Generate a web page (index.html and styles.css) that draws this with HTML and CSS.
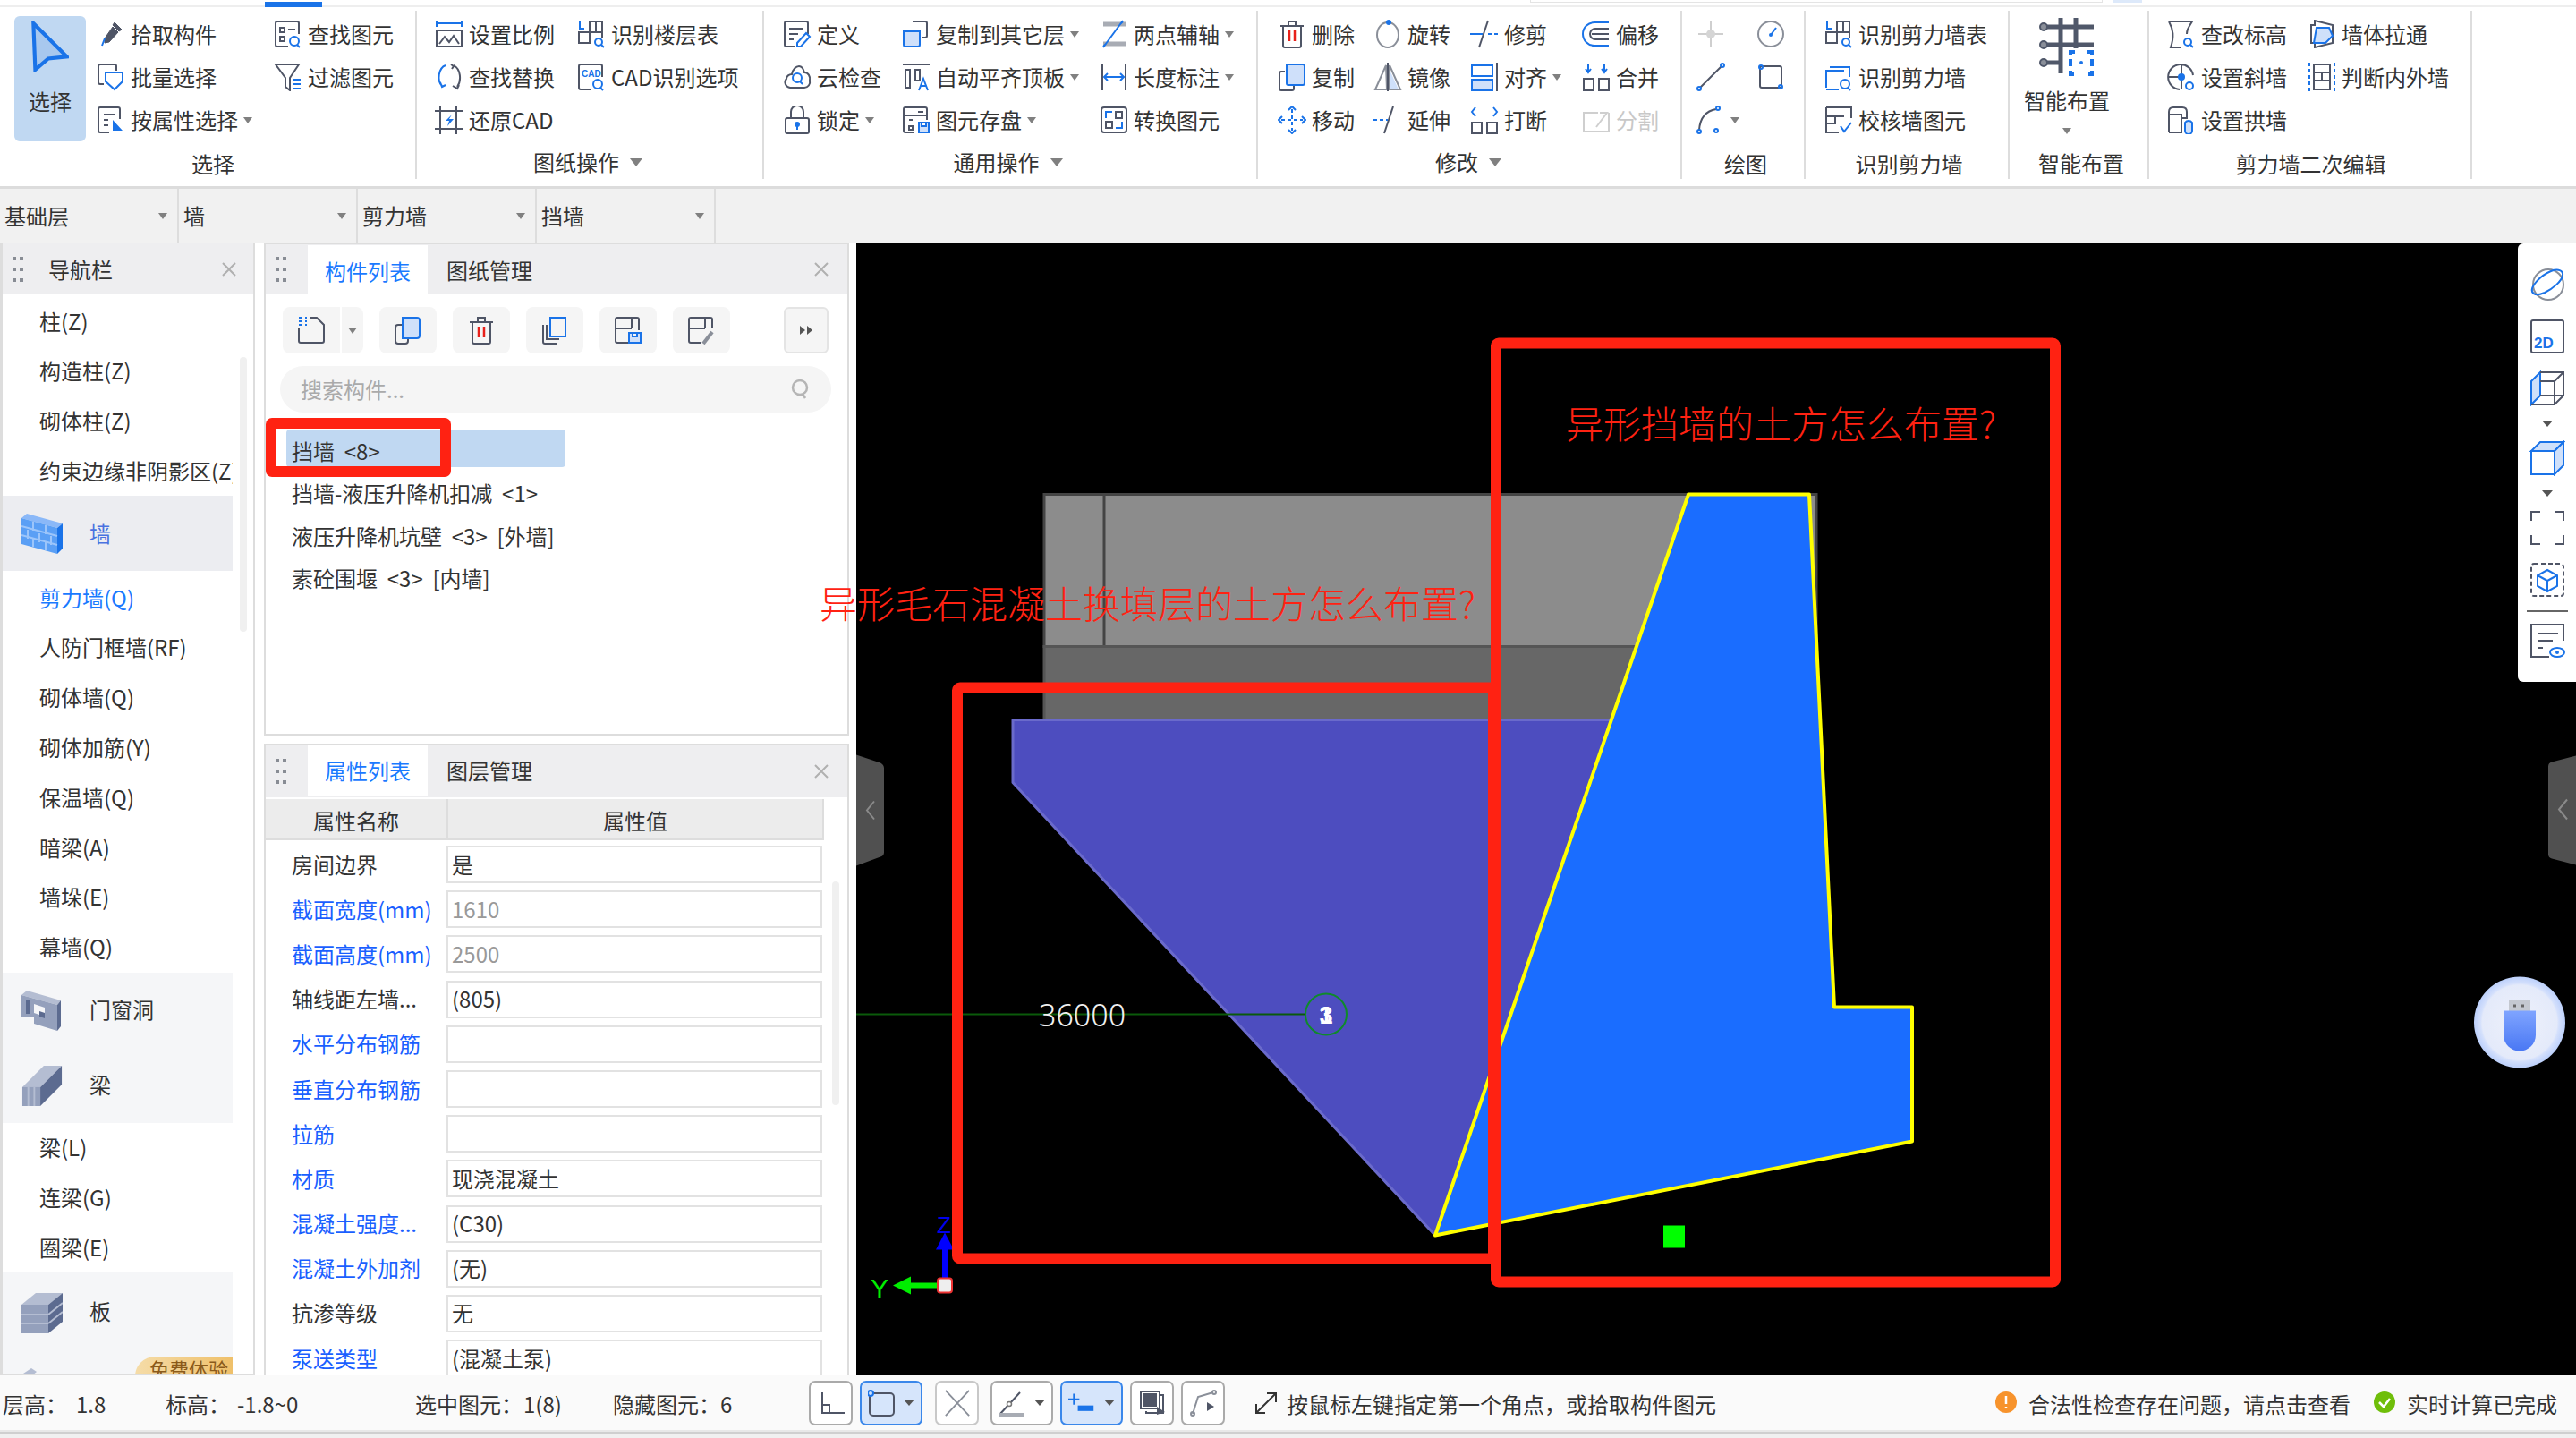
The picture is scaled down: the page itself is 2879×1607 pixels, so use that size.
FILE: index.html
```html
<!DOCTYPE html>
<html lang="zh-CN">
<head>
<meta charset="utf-8">
<title>GTJ</title>
<link rel="stylesheet" href="styles.css">
</head>
<body>
<svg class="defs" xmlns="http://www.w3.org/2000/svg">
<defs>
<radialGradient id="ballGrad"><stop offset="0" stop-color="#eef1fb"/><stop offset=".82" stop-color="#e4eafa"/><stop offset=".86" stop-color="#d4e0fc"/><stop offset="1" stop-color="#bcd0fb"/></radialGradient>
<linearGradient id="usbGrad" x1="0" y1="0" x2="0" y2="1"><stop offset="0" stop-color="#7fa4ff"/><stop offset="1" stop-color="#4a78f4"/></linearGradient>
<symbol id="i-pick" viewBox="0 0 32 32"><path class="fd" d="M18 8l6 6-10 11-5 1 0-5z"/><path class="fd" d="M20 3l8 8-3 2-7-7z"/><path class="b" d="M9 21l-3 8"/></symbol>
<symbol id="i-batch" viewBox="0 0 32 32"><path class="d" d="M8 24H4a2 2 0 0 1-2-2V4a2 2 0 0 1 2-2h16a2 2 0 0 1 2 2v5"/><path class="b" d="M10 11h19v10l-9 9-10-9z"/></symbol>
<symbol id="i-attr" viewBox="0 0 32 32"><path class="d" d="M4 2h20a2 2 0 0 1 2 2v11M14 30H4a2 2 0 0 1-2-2V4a2 2 0 0 1 2-2M8 10h12M8 16h5M8 22h5"/><path class="bf" d="M18 16l11 12h-11z"/></symbol>
<symbol id="i-find" viewBox="0 0 32 32"><path class="d" d="M16 30H4a2 2 0 0 1-2-2V4a2 2 0 0 1 2-2h22a2 2 0 0 1 2 2v12M7 9h5v5H7zM7 19h5v5H7zM16 11h8"/><circle class="b" cx="23" cy="24" r="5"/><path class="b" d="M26 28l3 3"/></symbol>
<symbol id="i-filter" viewBox="0 0 32 32"><path class="d" d="M2 2h26l-10 15v14l-5-4V17z"/><path class="b" d="M21 19h9M21 24h9M21 29h9"/></symbol>
<symbol id="i-scale" viewBox="0 0 32 32"><path class="b" d="M2 1v7M30 1v7M3 4h26"/><path class="d" d="M2 12h28v18H2zM5 27l6-8 5 6 5-7 6 9"/></symbol>
<symbol id="i-tableq" viewBox="0 0 32 32"><path class="d" d="M14 2h14v18M14 2v24H2V14h26M21 2v12"/><path class="b" d="M3 2v8h5"/><circle class="b" cx="24" cy="25" r="4"/><path class="b" d="M27 28l3 3"/></symbol>
<symbol id="i-replace" viewBox="0 0 32 32"><path class="b" d="M12 3C4 6 2 20 8 26M6 22l2 5 4-2"/><path class="d" d="M21 3c8 4 9 17 4 24M20 26l5 3 2-4M18 2l3 2-2 3"/></symbol>
<symbol id="i-cad" viewBox="0 0 32 32"><path class="d" d="M16 30H4a2 2 0 0 1-2-2V4a2 2 0 0 1 2-2h22a2 2 0 0 1 2 2v12"/><text class="cadt" x="5" y="16">CAD</text><circle class="b" cx="23" cy="24" r="5"/><path class="b" d="M26 28l3 3"/></symbol>
<symbol id="i-restore" viewBox="0 0 32 32"><path class="d" d="M6 0v32M24 0v32M0 6h32M0 26h32"/><path class="bf" d="M19 10l-7 7h4l-2 6 7-8h-5z"/></symbol>
<symbol id="i-define" viewBox="0 0 32 32"><path class="d" d="M14 30H4a2 2 0 0 1-2-2V4a2 2 0 0 1 2-2h22a2 2 0 0 1 2 2v12M7 10h16M7 16h10M7 22h5"/><path class="b" d="M26 15l4 4-10 11h-4v-4z"/></symbol>
<symbol id="i-cloud" viewBox="0 0 32 32"><path class="d" d="M8 28a6 6 0 0 1-4-10c0-3 3-5 6-5 1-6 5-9 8-9 3 0 5 3 6 7 4 0 7 4 6 9 1 4-2 8-6 8z"/><circle class="b" cx="16" cy="17" r="5"/><path class="b" d="M19 21l3 3"/></symbol>
<symbol id="i-lock" viewBox="0 0 32 32"><path class="d" d="M5 14h22a2 2 0 0 1 2 2v13a2 2 0 0 1-2 2H5a2 2 0 0 1-2-2V16a2 2 0 0 1 2-2zM9 14V7a7 7 0 0 1 14 0v7"/><circle class="bf" cx="16" cy="21" r="3"/><path class="b" d="M16 22v5"/></symbol>
<symbol id="i-copyfl" viewBox="0 0 32 32"><path class="d" d="M12 2h14a2 2 0 0 1 2 2v14a2 2 0 0 1-2 2h-4"/><path class="lb" d="M2 13h18v15a2 2 0 0 1-2 2H4a2 2 0 0 1-2-2z"/></symbol>
<symbol id="i-autotop" viewBox="0 0 32 32"><path class="d" d="M1 2h30M4 8h5v20H4zM15 8h5v12h-5z"/><path class="b" d="M19 31l5-13 5 13M21 26h6"/></symbol>
<symbol id="i-store" viewBox="0 0 32 32"><path class="d" d="M14 30H4a2 2 0 0 1-2-2V4a2 2 0 0 1 2-2h22a2 2 0 0 1 2 2v12M2 11h26M8 16h4M18 7h6M8 23h4v4H8z"/><path class="lb" d="M19 19h11v11H19zM22 19v4h5v-4"/></symbol>
<symbol id="i-axis2" viewBox="0 0 32 32"><path class="gt" d="M4 5h26M4 27h26"/><path class="b" d="M4 31L26 1M4 30l3-3M26 2l-3 3"/></symbol>
<symbol id="i-dim" viewBox="0 0 32 32"><path class="d" d="M3 1v30M29 1v30"/><path class="b" d="M5 16h22M9 12l-4 4 4 4M23 12l4 4-4 4"/></symbol>
<symbol id="i-conv" viewBox="0 0 32 32"><path class="d" d="M5 2h22a3 3 0 0 1 3 3v22a3 3 0 0 1-3 3H5a3 3 0 0 1-3-3V5a3 3 0 0 1 3-3zM7 18h7v7H7zM18 7h7v7h-7z"/><path class="b" d="M7 14V7h7M25 18v7h-7"/></symbol>
<symbol id="i-del" viewBox="0 0 32 32"><path class="d" d="M3 7h26M12 7V2h8v5M6 7v22a2 2 0 0 0 2 2h16a2 2 0 0 0 2-2V7"/><path class="r" d="M13 12v12M19 12v12"/></symbol>
<symbol id="i-rot" viewBox="0 0 32 32"><ellipse class="gr" cx="16" cy="17" rx="12" ry="14"/><circle class="bf" cx="17" cy="3" r="3"/></symbol>
<symbol id="i-trim" viewBox="0 0 32 32"><path class="d" d="M20 1L10 31"/><path class="b" d="M0 16h14"/><path class="bd" d="M20 16h12"/></symbol>
<symbol id="i-offset" viewBox="0 0 32 32"><path class="b" d="M30 3H14a13 13 0 0 0 0 26h16"/><path class="d" d="M30 10H15a6 6 0 0 0 0 12h15M11 16h19"/></symbol>
<symbol id="i-copy" viewBox="0 0 32 32"><path class="d" d="M8 10H4a2 2 0 0 0-2 2v17a2 2 0 0 0 2 2h12a2 2 0 0 0 2-2v-4"/><path class="lb" d="M10 2h18a2 2 0 0 1 2 2v19a2 2 0 0 1-2 2H12a2 2 0 0 1-2-2z"/></symbol>
<symbol id="i-mirror" viewBox="0 0 32 32"><path class="gr" d="M14 3L2 30h13zM18 3l12 27H18z"/><path class="lbn" d="M18 8l10 22H18z"/><path class="d" d="M16 0v32"/></symbol>
<symbol id="i-align" viewBox="0 0 32 32"><path class="d" d="M30 0v32"/><path class="b" d="M2 3h23v12H2z"/><path class="lb" d="M2 19h23v12H2z"/></symbol>
<symbol id="i-merge" viewBox="0 0 32 32"><path class="d" d="M2 18h11v13H2zM19 18h11v13H19z"/><path class="b" d="M7 1v10M25 1v10M4 7l3 4 3-4M22 7l3 4 3-4"/></symbol>
<symbol id="i-move" viewBox="0 0 32 32"><path class="bd" d="M16 4v24M4 16h24"/><path class="b" d="M12 5l4-4 4 4M12 27l4 4 4-4M5 12l-4 4 4 4M27 12l4 4-4 4"/></symbol>
<symbol id="i-ext" viewBox="0 0 32 32"><path class="d" d="M22 1L12 31"/><path class="bd" d="M0 16h16"/></symbol>
<symbol id="i-break" viewBox="0 0 32 32"><path class="d" d="M2 19h11v12H2zM19 19h11v12H19z"/><path class="b" d="M6 2L2 7l4 5M26 2l4 5-4 5"/></symbol>
<symbol id="i-split" viewBox="0 0 32 32"><path class="lg" d="M30 8v21H2V8h16M16 24l12-16h-8"/></symbol>
<symbol id="i-pt" viewBox="0 0 32 32"><path class="lg" d="M16 2v28M2 16h28"/><circle class="lgf" cx="16" cy="16" r="5"/></symbol>
<symbol id="i-clock" viewBox="0 0 32 32"><circle class="gr" cx="16" cy="16" r="14"/><path class="b" d="M16 17l6-8"/><circle class="bf" cx="16" cy="17" r="2"/></symbol>
<symbol id="i-ln" viewBox="0 0 32 32"><path class="d" d="M4 28L28 4"/><circle class="b" cx="3" cy="29" r="2"/><circle class="b" cx="29" cy="3" r="2"/></symbol>
<symbol id="i-rc" viewBox="0 0 32 32"><path class="d" d="M6 4h20a2 2 0 0 1 2 2v20a2 2 0 0 1-2 2H6a2 2 0 0 1-2-2V6a2 2 0 0 1 2-2z"/><circle class="b" cx="5" cy="5" r="2"/><circle class="b" cx="27" cy="27" r="2"/></symbol>
<symbol id="i-arc" viewBox="0 0 32 32"><path class="d" d="M3 27C4 15 10 6 22 4"/><circle class="b" cx="3" cy="29" r="2"/><circle class="b" cx="24" cy="3" r="2"/><circle class="b" cx="22" cy="28" r="2"/></symbol>
<symbol id="i-wrec" viewBox="0 0 32 32"><path class="b" d="M6 5h22v11M2 28V9h20M2 30h14"/><circle class="b" cx="23" cy="24" r="5"/><path class="b" d="M26 28l3 3"/></symbol>
<symbol id="i-wchk" viewBox="0 0 32 32"><path class="d" d="M2 2h28v12M2 2v28h14M2 12h20M12 12v8H2"/><path class="b" d="M18 23l4 6 8-10"/></symbol>
<symbol id="i-smart" viewBox="0 0 62 66"><path class="thick" d="M24 0v62M41 0v34M5 10h56M5 30h56M5 50h19"/><circle class="dk" cx="5" cy="10" r="4"/><circle class="dk" cx="5" cy="30" r="4"/><circle class="dk" cx="5" cy="50" r="4"/><path class="thb" d="M40 38h-5v25h5M54 38h5v25h-5"/><circle class="bf" cx="47" cy="50" r="2"/></symbol>
<symbol id="i-elev" viewBox="0 0 32 32"><path class="d" d="M2 2h26c-5 8-6 10-6 14M2 2c5 9 6 17 2 29h12"/><circle class="b" cx="23" cy="25" r="4"/><path class="b" d="M26 28l3 3"/></symbol>
<symbol id="i-pull" viewBox="0 0 32 32"><path class="d" d="M4 6h4V1l20 5v20l-20 5v-5H4z"/><path class="lb" d="M10 9h14l4 9-8 8H7z"/></symbol>
<symbol id="i-slope" viewBox="0 0 32 32"><path class="d" d="M14 30A14 14 0 1 1 29 14M2 16h15M16 2v28"/><circle class="bf" cx="16" cy="16" r="4"/><circle class="b" cx="25" cy="26" r="4"/></symbol>
<symbol id="i-inout" viewBox="0 0 32 32"><path class="d" d="M7 2h18v28H7zM7 11h18M7 20h18M16 11v9"/><path class="bd" d="M2 0v32M30 0v32"/></symbol>
<symbol id="i-arch" viewBox="0 0 32 32"><path class="d" d="M2 30V7c0-3 2-5 5-5h10c3 0 5 2 5 5v8M2 10h14v20H2M16 14h6"/><path class="lb" d="M20 19a5 5 0 0 1 8 0v9a4 4 0 0 1-8 0z"/></symbol>
<symbol id="i-new" viewBox="0 0 32 32"><path class="d" d="M14 2h8l8 8v18a2 2 0 0 1-2 2H4a2 2 0 0 1-2-2V14"/><path class="bd" d="M2 2h9M2 6h9M2 10h9"/></symbol>
<symbol id="i-dup" viewBox="0 0 32 32"><path class="d" d="M9 10H5a3 3 0 0 0-3 3v15a3 3 0 0 0 3 3h8a3 3 0 0 0 3-3v-2"/><path class="lb" d="M10 2h16a3 3 0 0 1 3 3v17a3 3 0 0 1-3 3H10z"/></symbol>
<symbol id="i-cpy2" viewBox="0 0 32 32"><path class="d" d="M3 10v19a2 2 0 0 0 2 2h14M7 10v16h14"/><path class="b" d="M11 2h17v21H11z"/></symbol>
<symbol id="i-sv" viewBox="0 0 32 32"><path class="d" d="M16 30H4a2 2 0 0 1-2-2V4a2 2 0 0 1 2-2h22a2 2 0 0 1 2 2v12M2 14h18M20 2v12"/><path class="lb" d="M17 19h13v11H17zM21 19v4h5v-4"/></symbol>
<symbol id="i-sp" viewBox="0 0 32 32"><path class="d" d="M16 30H4a2 2 0 0 1-2-2V4a2 2 0 0 1 2-2h22a2 2 0 0 1 2 2v10M2 14h18M20 2v12"/><path class="gt2" d="M28 18L18 31"/></symbol>
<symbol id="i-grip" viewBox="0 0 12 28"><path class="gp" d="M0 0h4v4H0zM8 0h4v4H8zM0 12h4v4H0zM8 12h4v4H8zM0 24h4v4H0zM8 24h4v4H8z"/></symbol>
<symbol id="i-x" viewBox="0 0 16 16"><path class="xl" d="M1 1l14 14M15 1L1 15"/></symbol>
<symbol id="i-sr" viewBox="0 0 20 24"><circle class="gs" cx="10" cy="10" r="8"/><path class="gs" d="M13 17l3 5"/></symbol>
</defs>
</svg>

<div class="app">
<div class="strip"><span class="strip-tab"></span><span class="strip-box"></span><span class="strip-lt"></span></div>

<div class="ribbon">
  <section class="grp g1">
    <div class="cols">
      <div class="bigsel"><svg class="bigarrow" viewBox="0 0 40 54"><path d="M2 2l36 36-20 2-14 12z"/></svg><span>选择</span></div>
      <div class="col w198">
        <div class="item"><svg class="ic"><use href="#i-pick"/></svg><span>拾取构件</span></div>
        <div class="item"><svg class="ic"><use href="#i-batch"/></svg><span>批量选择</span></div>
        <div class="item"><svg class="ic"><use href="#i-attr"/></svg><span>按属性选择</span><i class="dd"></i></div>
      </div>
      <div class="col">
        <div class="item"><svg class="ic"><use href="#i-find"/></svg><span>查找图元</span></div>
        <div class="item"><svg class="ic"><use href="#i-filter"/></svg><span>过滤图元</span></div>
      </div>
    </div>
    <div class="glabel">选择</div>
  </section>
  <section class="grp g2">
    <div class="cols">
      <div class="col w159">
        <div class="item"><svg class="ic"><use href="#i-scale"/></svg><span>设置比例</span></div>
        <div class="item"><svg class="ic"><use href="#i-replace"/></svg><span>查找替换</span></div>
        <div class="item"><svg class="ic"><use href="#i-restore"/></svg><span>还原CAD</span></div>
      </div>
      <div class="col">
        <div class="item"><svg class="ic"><use href="#i-tableq"/></svg><span>识别楼层表</span></div>
        <div class="item"><svg class="ic"><use href="#i-cad"/></svg><span>CAD识别选项</span></div>
      </div>
    </div>
    <div class="glabel">图纸操作<i class="dd wide"></i></div>
  </section>
  <section class="grp g3">
    <div class="cols">
      <div class="col w133">
        <div class="item"><svg class="ic"><use href="#i-define"/></svg><span>定义</span></div>
        <div class="item"><svg class="ic"><use href="#i-cloud"/></svg><span>云检查</span></div>
        <div class="item"><svg class="ic"><use href="#i-lock"/></svg><span>锁定</span><i class="dd"></i></div>
      </div>
      <div class="col w221">
        <div class="item"><svg class="ic"><use href="#i-copyfl"/></svg><span>复制到其它层</span><i class="dd"></i></div>
        <div class="item"><svg class="ic"><use href="#i-autotop"/></svg><span>自动平齐顶板</span><i class="dd"></i></div>
        <div class="item"><svg class="ic"><use href="#i-store"/></svg><span>图元存盘</span><i class="dd"></i></div>
      </div>
      <div class="col">
        <div class="item"><svg class="ic"><use href="#i-axis2"/></svg><span>两点辅轴</span><i class="dd"></i></div>
        <div class="item"><svg class="ic"><use href="#i-dim"/></svg><span>长度标注</span><i class="dd"></i></div>
        <div class="item"><svg class="ic"><use href="#i-conv"/></svg><span>转换图元</span></div>
      </div>
    </div>
    <div class="glabel">通用操作<i class="dd wide"></i></div>
  </section>
  <section class="grp g4">
    <div class="cols">
      <div class="col w107">
        <div class="item"><svg class="ic"><use href="#i-del"/></svg><span>删除</span></div>
        <div class="item"><svg class="ic"><use href="#i-copy"/></svg><span>复制</span></div>
        <div class="item"><svg class="ic"><use href="#i-move"/></svg><span>移动</span></div>
      </div>
      <div class="col w108">
        <div class="item"><svg class="ic"><use href="#i-rot"/></svg><span>旋转</span></div>
        <div class="item"><svg class="ic"><use href="#i-mirror"/></svg><span>镜像</span></div>
        <div class="item"><svg class="ic"><use href="#i-ext"/></svg><span>延伸</span></div>
      </div>
      <div class="col w125">
        <div class="item"><svg class="ic"><use href="#i-trim"/></svg><span>修剪</span></div>
        <div class="item"><svg class="ic"><use href="#i-align"/></svg><span>对齐</span><i class="dd"></i></div>
        <div class="item"><svg class="ic"><use href="#i-break"/></svg><span>打断</span></div>
      </div>
      <div class="col">
        <div class="item"><svg class="ic"><use href="#i-offset"/></svg><span>偏移</span></div>
        <div class="item"><svg class="ic"><use href="#i-merge"/></svg><span>合并</span></div>
        <div class="item off"><svg class="ic"><use href="#i-split"/></svg><span>分割</span></div>
      </div>
    </div>
    <div class="glabel">修改<i class="dd wide"></i></div>
  </section>
  <section class="grp g5">
    <div class="cols">
      <div class="col w67">
        <div class="item"><svg class="ic"><use href="#i-pt"/></svg></div>
        <div class="item"><svg class="ic"><use href="#i-ln"/></svg></div>
        <div class="item"><svg class="ic"><use href="#i-arc"/></svg><i class="dd"></i></div>
      </div>
      <div class="col">
        <div class="item"><svg class="ic"><use href="#i-clock"/></svg></div>
        <div class="item"><svg class="ic"><use href="#i-rc"/></svg></div>
      </div>
    </div>
    <div class="glabel">绘图</div>
  </section>
  <section class="grp g6">
    <div class="cols">
      <div class="col">
        <div class="item"><svg class="ic"><use href="#i-tableq"/></svg><span>识别剪力墙表</span></div>
        <div class="item"><svg class="ic"><use href="#i-wrec"/></svg><span>识别剪力墙</span></div>
        <div class="item"><svg class="ic"><use href="#i-wchk"/></svg><span>校核墙图元</span></div>
      </div>
    </div>
    <div class="glabel">识别剪力墙</div>
  </section>
  <section class="grp g7">
    <div class="cols">
      <div class="bigsmart"><svg class="smart"><use href="#i-smart"/></svg><span>智能布置</span><i class="dd"></i></div>
    </div>
    <div class="glabel">智能布置</div>
  </section>
  <section class="grp g8">
    <div class="cols">
      <div class="col w157">
        <div class="item"><svg class="ic"><use href="#i-elev"/></svg><span>查改标高</span></div>
        <div class="item"><svg class="ic"><use href="#i-slope"/></svg><span>设置斜墙</span></div>
        <div class="item"><svg class="ic"><use href="#i-arch"/></svg><span>设置拱墙</span></div>
      </div>
      <div class="col">
        <div class="item"><svg class="ic"><use href="#i-pull"/></svg><span>墙体拉通</span></div>
        <div class="item"><svg class="ic"><use href="#i-inout"/></svg><span>判断内外墙</span></div>
      </div>
    </div>
    <div class="glabel">剪力墙二次编辑</div>
  </section>
</div>

<div class="selbar">
  <div class="selcell"><span>基础层</span><i class="dd"></i></div>
  <div class="selcell"><span>墙</span><i class="dd"></i></div>
  <div class="selcell"><span>剪力墙</span><i class="dd"></i></div>
  <div class="selcell"><span>挡墙</span><i class="dd"></i></div>
</div>

<div class="main">
  <aside class="nav">
    <div class="navhead"><svg class="grip"><use href="#i-grip"/></svg><span class="navtitle">导航栏</span><svg class="close"><use href="#i-x"/></svg></div>
    <div class="navlist">
      <div class="nrow">柱(Z)</div>
      <div class="nrow">构造柱(Z)</div>
      <div class="nrow">砌体柱(Z)</div>
      <div class="nrow">约束边缘非阴影区(Z)</div>
      <div class="ngroup on">
        <svg class="nicon" viewBox="0 0 46 46"><path class="wt" d="M0 6l6-5 40 11-6 5z"/><path class="wf" d="M0 6l40 11v29L0 35z"/><path class="wd" d="M40 17l6-5v28l-6 6z"/><path class="wl" d="M0 15l40 11M0 25l40 11M13 10v10M27 14v10M7 19v10M20 23v10M33 26v10M13 29v9M27 33v9"/></svg>
        <span>墙</span>
      </div>
      <div class="nrow act">剪力墙(Q)</div>
      <div class="nrow">人防门框墙(RF)</div>
      <div class="nrow">砌体墙(Q)</div>
      <div class="nrow">砌体加筋(Y)</div>
      <div class="nrow">保温墙(Q)</div>
      <div class="nrow">暗梁(A)</div>
      <div class="nrow">墙垛(E)</div>
      <div class="nrow">幕墙(Q)</div>
      <div class="ngroup">
        <svg class="nicon" viewBox="0 0 46 46"><path class="st" d="M0 6l6-5 38 11-4 5z"/><path class="sf" d="M0 6l40 11v29l-26-8V26l12 4V20L14 16v14L0 30z"/><path class="sd" d="M40 17l4-5v29l-4 5z"/><path class="sd" d="M5 12h5v15H5zM20 24l6 2v6l-6-2z"/></svg>
        <span>门窗洞</span>
      </div>
      <div class="ngroup">
        <svg class="nicon" viewBox="0 0 46 48"><path class="st" d="M0 26L25 1h21L21 26z"/><path class="sf" d="M0 26h21v22H0z"/><path class="sd" d="M21 26L46 1v22L21 48z"/><path class="wl2" d="M7 26v22M14 26v22"/></svg>
        <span>梁</span>
      </div>
      <div class="nrow">梁(L)</div>
      <div class="nrow">连梁(G)</div>
      <div class="nrow">圈梁(E)</div>
      <div class="ngroup last">
        <svg class="nicon" viewBox="0 0 46 46"><path class="st" d="M0 14L16 1h30L30 14z"/><path class="sf" d="M0 14h30v32H0z"/><path class="sd" d="M30 14L46 1v32L30 46z"/><path class="wl2" d="M0 25h30M0 35h30M30 25L46 12M30 35l16-13"/></svg>
        <span>板</span>
        <svg class="nicon2" viewBox="0 0 20 20"><path class="st" d="M0 10L12 2l6 4-10 8z"/></svg>
        <div class="badge">免费体验</div>
      </div>
    </div>
    <div class="navscroll"></div>
  </aside>

  <div class="midcol">
    <section class="panel top">
      <div class="phead"><svg class="grip"><use href="#i-grip"/></svg><div class="tab on">构件列表</div><div class="tab">图纸管理</div><svg class="close"><use href="#i-x"/></svg></div>
      <div class="tools">
        <div class="tbtn split"><svg class="tic"><use href="#i-new"/></svg><span class="tsplit"><i class="dd"></i></span></div>
        <div class="tbtn"><svg class="tic"><use href="#i-dup"/></svg></div>
        <div class="tbtn"><svg class="tic"><use href="#i-del"/></svg></div>
        <div class="tbtn"><svg class="tic"><use href="#i-cpy2"/></svg></div>
        <div class="tbtn"><svg class="tic"><use href="#i-sv"/></svg></div>
        <div class="tbtn"><svg class="tic"><use href="#i-sp"/></svg></div>
        <div class="tmore"><i class="ff"></i><i class="ff"></i></div>
      </div>
      <div class="search"><span>搜索构件...</span><svg class="sic"><use href="#i-sr"/></svg></div>
      <div class="clist">
        <div class="crow sel">挡墙  &lt;8&gt;</div>
        <div class="crow">挡墙-液压升降机扣减  &lt;1&gt;</div>
        <div class="crow">液压升降机坑壁  &lt;3&gt;  [外墙]</div>
        <div class="crow">素砼围堰  &lt;3&gt;  [内墙]</div>
      </div>
      <div class="redmark"></div>
    </section>

    <section class="panel prop">
      <div class="phead short"><svg class="grip"><use href="#i-grip"/></svg><div class="tab on">属性列表</div><div class="tab">图层管理</div><svg class="close"><use href="#i-x"/></svg></div>
      <div class="thead"><div>属性名称</div><div>属性值</div></div>
      <div class="rows">
        <div class="prow"><span class="k">房间边界</span><span class="v">是</span></div>
        <div class="prow"><span class="k bl">截面宽度(mm)</span><span class="v dim">1610</span></div>
        <div class="prow"><span class="k bl">截面高度(mm)</span><span class="v dim">2500</span></div>
        <div class="prow"><span class="k">轴线距左墙...</span><span class="v">(805)</span></div>
        <div class="prow"><span class="k bl">水平分布钢筋</span><span class="v"></span></div>
        <div class="prow"><span class="k bl">垂直分布钢筋</span><span class="v"></span></div>
        <div class="prow"><span class="k bl">拉筋</span><span class="v"></span></div>
        <div class="prow"><span class="k bl">材质</span><span class="v">现浇混凝土</span></div>
        <div class="prow"><span class="k bl">混凝土强度...</span><span class="v">(C30)</span></div>
        <div class="prow"><span class="k bl">混凝土外加剂</span><span class="v">(无)</span></div>
        <div class="prow"><span class="k">抗渗等级</span><span class="v">无</span></div>
        <div class="prow"><span class="k bl">泵送类型</span><span class="v">(混凝土泵)</span></div>
      </div>
      <div class="propscroll"></div>
    </section>
  </div>

  <div class="canvas">
    <svg class="scene" viewBox="957 273 1922 1264">
      <rect class="g-up" x="1167" y="553" width="863" height="170"/>
      <path class="g-ln" d="M1234 553v170"/>
      <rect class="g-lo" x="1167" y="723" width="740" height="82"/>
      <path class="purple" d="M1132 805H1810L1604 1381L1132 875Z"/>
      <path class="blue" d="M1887 553H2022L2050 1126H2137V1276L1604 1381Z"/>
      <path class="gline" d="M957 1134H1459"/>
      <circle class="gring" cx="1482" cy="1134" r="23"/>
      <text class="ringt" x="1482" y="1144">1</text>
      <text class="ringt" x="1482" y="1144">3</text>
      <text class="dimt" x="1161" y="1147">36000</text>
      <rect class="gsq" x="1859" y="1370" width="24" height="25"/>
      <path class="axz" d="M1056 1430V1395"/><path class="axzf" d="M1046 1397L1056 1378L1066 1397Z"/>
      <path class="axy" d="M1050 1437H1015"/><path class="axyf" d="M1018 1427L998 1437L1018 1447Z"/>
      <rect class="axo" x="1048" y="1429" width="16" height="16" rx="3"/>
      <text class="axtz" x="1047" y="1378">Z</text>
      <text class="axty" x="973" y="1450">Y</text>
      <rect class="redbox" x="1070" y="769" width="599" height="638" rx="3"/>
      <rect class="redbox" x="1672" y="384" width="625" height="1049" rx="3"/>
      <text class="note" x="1750" y="490">异形挡墙的土方怎么布置?</text>
      <text class="note" x="916" y="691">异形毛石混凝土换填层的土方怎么布置?</text>
      <path class="hand" d="M957 844L984 853Q988 855 988 859V953Q988 957 984 958L957 968Z"/>
      <path class="chev" d="M977 896L969 906L977 916"/>
      <path class="hand" d="M2879 845L2852 852Q2848 853 2848 857V955Q2848 959 2852 960L2879 967Z"/>
      <path class="chev" d="M2869 894L2860 905L2869 916"/>
      <circle class="ball" cx="2816" cy="1143" r="51"/>
      <rect class="ucap" x="2804" y="1118" width="24" height="14"/>
      <rect class="uhole" x="2809" y="1123" width="3" height="3"/><rect class="uhole" x="2818" y="1123" width="3" height="3"/>
      <path class="ubody" d="M2798 1130H2834V1157A18 18 0 0 1 2798 1157Z"/>
    </svg>
    <div class="rtools">
      <div class="rt"><svg class="rtic" viewBox="0 0 40 40"><circle class="gr" cx="21" cy="20" r="17"/><path class="b" d="M3 28C1 22 12 10 24 5c8-3 14-1 13 5-1 6-10 14-20 19-7 3-12 3-14-1z"/></svg></div>
      <div class="rt"><svg class="rtic" viewBox="0 0 40 40"><rect class="d" x="2" y="2" width="36" height="36" rx="2"/><text class="t2d" x="5" y="33">2D</text></svg></div>
      <div class="rt"><svg class="rtic" viewBox="0 0 40 40"><path class="lb" d="M2 12L12 2V28L2 38Z"/><path class="d" d="M12 2H38V28L28 38H2M12 28H38M28 12V38M28 12L38 2M12 12H28"/></svg></div>
      <div class="rtdrop"><i class="ddk"></i></div>
      <div class="rt"><svg class="rtic" viewBox="0 0 40 40"><path class="lb" d="M2 12L12 2H38L28 12Z"/><path class="lb" d="M28 12L38 2V28L28 38Z"/><path class="b" d="M2 12H28V38H2Z"/></svg></div>
      <div class="rtdrop"><i class="ddk"></i></div>
      <div class="rt"><svg class="rtic" viewBox="0 0 40 40"><path class="d" d="M2 12V2H12M28 2H38V12M38 28V38H28M12 38H2V28"/></svg></div>
      <div class="rt"><svg class="rtic" viewBox="0 0 40 40"><rect class="dd2" x="2" y="2" width="36" height="36" rx="3"/><path class="b" d="M20 9L31 15V27L20 33L9 27V15ZM9 15L20 21L31 15M20 21V33"/></svg></div>
      <div class="rthr"></div>
      <div class="rt short"><svg class="rtic" viewBox="0 0 40 40"><path class="d" d="M22 38H2V2H38V20M9 12H32M9 20H26M9 28H15"/><ellipse class="b" cx="31" cy="33" rx="8" ry="5"/><circle class="bf" cx="31" cy="33" r="2"/></svg></div>
    </div>
  </div>
</div>

<div class="status">
  <div class="stat s1"><span>层高：</span><span>1.8</span></div>
  <div class="stat s2"><span>标高：</span><span>-1.8~0</span></div>
  <div class="stat s3"><span>选中图元：</span><span>1(8)</span></div>
  <div class="stat s4"><span>隐藏图元：</span><span>6</span></div>
  <div class="sbtns">
    <div class="sb"><svg class="sbi" viewBox="0 0 30 30"><path class="d" d="M5 3V26H30M5 17H13V26"/></svg></div>
    <div class="sb wide on"><svg class="sbi" viewBox="0 0 30 30"><rect class="d" x="2" y="4" width="27" height="25" rx="4"/><circle class="bw" cx="3" cy="4" r="3"/></svg><i class="ddk"></i></div>
    <div class="sb light"><svg class="sbi" viewBox="0 0 32 32"><path class="gr" d="M2 1L30 31M30 1L2 31"/></svg></div>
    <div class="sb wide"><svg class="sbi" viewBox="0 0 30 30"><path class="d" d="M1 28L24 3"/><rect class="gb" x="1" y="26" width="28" height="4"/><circle class="wc" cx="12" cy="16" r="2.500"/></svg><i class="ddk"></i></div>
    <div class="sb wide on"><svg class="sbi" viewBox="0 0 34 30"><path class="b" d="M0 10H14M7 3V17"/><rect class="bfr" x="12" y="18" width="20" height="7"/></svg><i class="ddk"></i></div>
    <div class="sb"><svg class="sbi" viewBox="0 0 30 30"><path class="d" d="M2 2H23V21H2zM24 6H27V26H8V24"/><rect class="dkf" x="4" y="4" width="16" height="15"/><path class="dkf" d="M20 19L29 25L20 28Z"/></svg></div>
    <div class="sb"><svg class="sbi" viewBox="0 0 30 30"><path class="gr" d="M3 27L9 8L26 3"/><circle class="gr" cx="3" cy="27" r="2"/><circle class="gr" cx="27" cy="3" r="2"/><path class="dkf" d="M19 14L27 19L19 24Z"/></svg></div>
  </div>
  <svg class="pic" viewBox="0 0 26 26"><path class="dk2" d="M2 24L24 2M14 2H24V12M2 14V24H12"/></svg>
  <span class="prompt">按鼠标左键指定第一个角点，或拾取构件图元</span>
  <div class="chk warn"><svg class="cic" viewBox="0 0 24 24"><circle class="oc" cx="12" cy="12" r="12"/><path class="wl3" d="M12 5V14M12 17V19"/></svg><span>合法性检查存在问题，请点击查看</span></div>
  <div class="chk"><svg class="cic" viewBox="0 0 24 24"><circle class="gc" cx="12" cy="12" r="12"/><path class="wl3" d="M6 12L11 17L18 8"/></svg><span>实时计算已完成</span></div>
</div>
<div class="foot"></div>
</div>
</body>
</html>
```

FILE: styles.css
```css
html, body { margin: 0; padding: 0; background: #fff; }
body { width: 2879px; height: 1607px; overflow: hidden; font-family: "Noto Sans CJK SC", "Liberation Sans", sans-serif; font-size: 24px; line-height: 1.2; color: #333; }
* { box-sizing: border-box; }
.defs { position: absolute; width: 0; height: 0; }
.app { display: flex; flex-direction: column; width: 2879px; height: 1607px; overflow: hidden; }

/* shared svg paints */
.d { fill: none; stroke: #4f5566; stroke-width: 2; }
.fd { fill: #4f5566; stroke: #4f5566; stroke-width: 1; }
.b { fill: none; stroke: #1a73e8; stroke-width: 2; }
.bd { fill: none; stroke: #1a73e8; stroke-width: 2; stroke-dasharray: 4 3; }
.bf { fill: #1a73e8; }
.lb { fill: #cfe0fa; stroke: #1a73e8; stroke-width: 2; }
.lbn { fill: #cfe0fa; stroke: none; }
.r { fill: none; stroke: #e8201a; stroke-width: 2.500; }
.gr { fill: none; stroke: #8a8f99; stroke-width: 2; }
.gt { fill: none; stroke: #a8acb4; stroke-width: 5; }
.gt2 { fill: none; stroke: #8a8f99; stroke-width: 4; }
.lg { fill: none; stroke: #cfcfcf; stroke-width: 2; }
.lgf { fill: #d5d5d5; }
.cadt { font-size: 10px; font-weight: 700; fill: #1a73e8; font-family: "Liberation Sans", sans-serif; }
.thick { fill: none; stroke: #50586a; stroke-width: 5; }
.thb { fill: none; stroke: #1a73e8; stroke-width: 4; stroke-dasharray: 8 5; }
.dk { fill: #8a8f99; stroke: #50586a; stroke-width: 2; }
.gp { fill: #888c94; }
.xl { fill: none; stroke: #b0b0b0; stroke-width: 2; }
.gs { fill: none; stroke: #b5b5b5; stroke-width: 2.500; }

/* top strip */
.strip { height: 8px; flex: none; border-bottom: 2px solid #eee; display: flex; align-items: flex-start; }
.strip-tab { width: 64px; height: 6px; margin: 2px 0 0 296px; background: #1a73e8; flex: none; }
.strip-box { width: 640px; height: 3px; margin-left: 1350px; border: 1px solid #e4e4e4; border-top: 0; flex: none; }
.strip-lt { width: 32px; height: 3px; margin-left: 12px; background: #dde9fa; flex: none; }

/* ribbon */
.ribbon { height: 203px; flex: none; display: flex; align-items: flex-start; border-bottom: 3px solid #dcdcdc; background: #fff; }
.grp { height: 188px; margin-top: 4px; padding-top: 2px; border-right: 2px solid #ddd; display: flex; flex-direction: column; flex: none; }
.g1 { width: 466px; padding-left: 16px; }
.g2 { width: 388px; padding-left: 20px; }
.g3 { width: 552px; padding-left: 21px; }
.g4 { width: 474px; padding-left: 22px; }
.g5 { width: 138px; padding-left: 16px; }
.g6 { width: 228px; padding-left: 21px; }
.g7 { width: 156px; padding-left: 14px; }
.g8 { width: 361px; padding-left: 20px; }
.cols { display: flex; height: 144px; }
.col { display: flex; flex-direction: column; flex: none; }
.w198 { width: 198px; } .w159 { width: 159px; } .w133 { width: 133px; } .w221 { width: 221px; }
.w107 { width: 107px; } .w108 { width: 108px; } .w125 { width: 125px; } .w67 { width: 67px; } .w157 { width: 157px; }
.item { height: 48px; display: flex; align-items: center; gap: 6px; white-space: nowrap; }
.item.off { color: #c8c8c8; }
.ic { width: 32px; height: 32px; flex: none; }
.dd { display: inline-block; flex: none; width: 0; height: 0; border-left: 5px solid transparent; border-right: 5px solid transparent; border-top: 7px solid #808080; }
.dd.wide { border-left-width: 7px; border-right-width: 7px; border-top-width: 9px; margin-left: 12px; }
.glabel { margin-top: 5px; height: 40px; display: flex; align-items: center; justify-content: center; }
.g1 .glabel { margin-left: -4px; padding-top: 4px; }
.g2 .glabel { margin-left: -24px; }
.g3 .glabel { margin-left: -26px; }
.g4 .glabel { margin-left: -24px; }
.g5 .glabel { margin-left: -10px; padding-top: 4px; }
.g6 .glabel { margin-left: -16px; padding-top: 4px; }
.g7 .glabel { margin-left: -8px; padding-top: 4px; }
.g8 .glabel { margin-left: -18px; padding-top: 4px; }
.bigsel { width: 80px; height: 140px; margin: 4px 12px 0 0; background: #c0d8f2; border-radius: 6px; display: flex; flex-direction: column; align-items: center; flex: none; }
.bigarrow { width: 42px; height: 56px; margin-top: 6px; margin-bottom: 19px; }
.bigarrow path { fill: #a8c8ee; stroke: #1a73e8; stroke-width: 4; }
.bigsmart { width: 100px; display: flex; flex-direction: column; align-items: center; }
.smart { width: 62px; height: 66px; margin-top: 6px; margin-bottom: 12px; }
.bigsmart .dd { margin-top: 16px; }

/* selector bar */
.selbar { height: 61px; flex: none; display: flex; background: #f1f1f1; }
.selcell { width: 200px; padding: 0 11px 0 5px; border-right: 2px solid #ddd; display: flex; align-items: center; justify-content: space-between; }

/* main */
.main { flex: none; height: 1265px; display: flex; }
.nav { width: 285px; margin-right: 10px; flex: none; position: relative; border-left: 3px solid #ddd; border-right: 2px solid #ddd; border-bottom: 2px solid #ddd; display: flex; flex-direction: column; overflow: hidden; }
.navhead { height: 57px; flex: none; background: #eeeef0; display: flex; align-items: center; padding-left: 11px; }
.grip { width: 12px; height: 28px; flex: none; }
.navtitle { margin-left: 28px; padding-top: 2px; }
.close { width: 16px; height: 16px; flex: none; margin-left: auto; margin-right: 19px; }
.navlist { padding-top: 2px; flex: 1; overflow: hidden; }
.nrow { width: 257px; height: 55.800px; padding-left: 41px; display: flex; align-items: center; white-space: nowrap; overflow: hidden; }
.nrow.act { color: #1a7aff; }
.ngroup { width: 257px; height: 84px; background: #f5f6f8; display: flex; align-items: center; position: relative; overflow: hidden; }
.ngroup.on { background: #ecedf1; margin-bottom: 2px; color: #4a72e0; }
.ngroup.last { height: 118px; align-items: flex-start; padding-top: 22px; }
.ngroup.last span { margin-top: 7px; }
.ngroup span { margin-left: 30px; }
.nicon { width: 46px; height: 46px; margin-left: 21px; flex: none; }
.nicon2 { position: absolute; left: 20px; top: 105px; width: 20px; height: 20px; }
.wt { fill: #8ab8f8; } .wf { fill: #5a9ff5; } .wd { fill: #1a73e8; }
.wl { fill: none; stroke: #9cc5fa; stroke-width: 2; }
.st { fill: #b4bdd2; } .sf { fill: #94a0bc; } .sd { fill: #5c6b90; }
.wl2 { fill: none; stroke: #b4bdd2; stroke-width: 2; }
.badge { position: absolute; left: 148px; top: 94px; width: 109px; height: 60px; padding-left: 16px; border-radius: 22px 0 0 0; background: linear-gradient(90deg, #f5dca8, #efc06a); color: #8a5a1a; font-size: 22px; white-space: nowrap; }
.navscroll { position: absolute; left: 265px; top: 127px; width: 8px; height: 307px; border-radius: 4px; background: #f0f0f0; }

/* middle */
.midcol { width: 654px; margin-right: 8px; flex: none; display: flex; flex-direction: column; gap: 9px; }
.panel { border: 2px solid #ddd; border-top: 1px solid #ddd; position: relative; overflow: hidden; }
.panel.top { height: 550px; }
.panel.prop { height: 706px; border-bottom: 0; }
.phead { height: 56px; flex: none; background: #eeeef0; display: flex; align-items: center; padding-left: 11px; }
.phead.short { height: 59px; }
.phead .grip { margin-right: 24px; }
.phead .close { margin-right: 21px; }
.tab { width: 134px; height: 100%; padding-top: 2px; display: flex; align-items: center; justify-content: center; margin-top: 2px; }
.tab.on { background: #fff; color: #1a7aff; }
.phead.short .tab { height: 56px; margin-top: -1px; padding-top: 0; }
.phead .tab + .tab { width: 138px; margin-top: 0; }
.tools { display: flex; align-items: center; gap: 18px; margin-top: 14px; padding: 0 21px 0 19px; height: 52px; }
.tbtn { width: 64px; height: 52px; background: #f5f5f5; border-radius: 8px; display: flex; align-items: center; justify-content: center; flex: none; }
.tbtn.split { width: 90px; justify-content: flex-start; }
.tic { width: 32px; height: 32px; flex: none; margin-left: 0; }
.tbtn.split .tic { margin-left: 16px; }
.tsplit { width: 26px; height: 52px; margin-left: 16px; border-left: 2px solid #fff; display: flex; align-items: center; justify-content: center; }
.tmore { width: 50px; height: 52px; margin-left: auto; border: 2px solid #e4e4e4; border-radius: 6px; background: #f5f5f5; display: flex; align-items: center; justify-content: center; gap: 2px; }
.ff { width: 0; height: 0; border-top: 5px solid transparent; border-bottom: 5px solid transparent; border-left: 6px solid #555; }
.search { height: 52px; margin: 14px 18px 0 16px; padding: 0 25px 0 23px; border-radius: 26px; background: #f5f5f5; color: #aaa; display: flex; align-items: center; justify-content: space-between; }
.sic { width: 20px; height: 24px; flex: none; }
.clist { margin-top: 19px; }
.crow { height: 47.500px; padding-left: 29px; padding-top: 6px; display: flex; align-items: center; white-space: pre; }
.crow.sel { width: 312px; height: 42px; margin: 3px 0 3px 23px; padding-left: 6px; background: #c0d8f2; border-radius: 4px; }
.redmark { position: absolute; left: 0; top: 194px; width: 207px; height: 66px; border: 12px solid #ff2212; border-radius: 7px; }

.thead { height: 46px; margin-top: 2px; width: 624px; background: #ececec; border-bottom: 2px solid #ddd; border-right: 2px solid #ddd; display: grid; grid-template-columns: 202px 1fr; }
.thead div { display: flex; align-items: center; justify-content: center; padding-top: 4px; }
.thead div + div { border-left: 2px solid #ddd; }
.rows { display: flex; flex-direction: column; gap: 8.200px; margin-top: 6px; }
.prow { display: grid; grid-template-columns: 202px 420px; height: 42px; flex: none; }
.k { padding-left: 29px; display: flex; align-items: center; white-space: nowrap; }
.k.bl { color: #1a5fff; }
.v { border: 2px solid #e2e2e2; padding-left: 4px; display: flex; align-items: center; white-space: nowrap; }
.v.dim { color: #999; }
.propscroll { position: absolute; left: 633px; top: 153px; width: 8px; height: 250px; border-radius: 4px; background: #f0f0f0; }

/* canvas */
.canvas { flex: 1; position: relative; background: #000; }
.scene { display: block; width: 1922px; height: 1265px; overflow: visible; }
.g-up { fill: #8c8c8c; stroke: #444; stroke-width: 3; }
.g-ln { fill: none; stroke: #444; stroke-width: 3; }
.g-lo { fill: #676767; stroke: #555; stroke-width: 3; }
.purple { fill: #4d4dbf; stroke: #6a6acb; stroke-width: 3; stroke-linejoin: round; }
.blue { fill: #1a6dff; stroke: #ffff00; stroke-width: 4; stroke-linejoin: round; }
.gline { stroke: #0a5a0a; stroke-width: 2; fill: none; }
.gring { fill: none; stroke: #0f8a2a; stroke-width: 2; }
.ringt { font-family: "Liberation Sans", sans-serif; font-size: 27px; font-weight: 700; fill: #fff; text-anchor: middle; }
.dimt { font-family: "Noto Sans", sans-serif; font-size: 34px; font-weight: 300; fill: #f0f0f0; }
.gsq { fill: #00ff00; }
.axz { stroke: #0000ff; stroke-width: 6; fill: none; } .axzf { fill: #0000ff; }
.axy { stroke: #00ee00; stroke-width: 6; fill: none; } .axyf { fill: #00ee00; }
.axo { fill: #eee; stroke: #ee3333; stroke-width: 2; }
.axtz { font-family: "Liberation Sans", sans-serif; font-size: 26px; fill: #0000ee; }
.axty { font-family: "Liberation Sans", sans-serif; font-size: 30px; fill: #00ee00; }
.redbox { fill: none; stroke: #ff2212; stroke-width: 12; }
.note { font-size: 42px; font-weight: 300; fill: #ff2212; }
.hand { fill: #505050; }
.chev { fill: none; stroke: #8a8a8a; stroke-width: 2; }
.ball { fill: url(#ballGrad); }
.ucap { fill: #c4c8d0; }
.uhole { fill: #666; }
.ubody { fill: url(#usbGrad); }

.rtools { position: absolute; right: 0; top: 0; width: 65px; height: 490px; padding-top: 17px; background: #fff; border-radius: 6px 0 0 6px; display: flex; flex-direction: column; align-items: center; }
.rt { height: 58px; flex: none; display: flex; align-items: center; justify-content: center; }
.rt.short { height: 54px; }
.rtic { width: 40px; height: 40px; }
.t2d { font-family: "Liberation Sans", sans-serif; font-size: 17px; font-weight: 700; fill: #1a73e8; }
.rtdrop { height: 20px; flex: none; display: flex; align-items: center; }
.ddk { display: inline-block; flex: none; width: 0; height: 0; border-left: 6px solid transparent; border-right: 6px solid transparent; border-top: 7px solid #555; }
.dd2 { fill: none; stroke: #4f5566; stroke-width: 2; stroke-dasharray: 5 3; }
.rthr { height: 12px; width: 46px; flex: none; background: linear-gradient(#666, #666) center / 100% 2px no-repeat; }

/* status */
.status { height: 61px; flex: none; background: #fafafa; display: flex; align-items: center; padding-left: 3px; white-space: nowrap; }
.stat { display: flex; flex: none; padding-top: 3px; }
.s1 { width: 182px; gap: 10px; } .s2 { width: 279px; gap: 8px; } .s3 { width: 221px; gap: 1px; } .s4 { width: 219px; }
.sbtns { display: flex; gap: 8px; flex: none; }
.sb { width: 49px; height: 50px; border: 2px solid #aaa; border-radius: 7px; background: #fff; display: flex; align-items: center; justify-content: center; gap: 10px; flex: none; }
.sb.wide { width: 70px; }
.sb.on { background: #d6e5fb; border-color: #3a87ea; }
.sb.light { border-color: #c8c8c8; margin: 0 5px 0 6px; }
.sbi { width: 30px; height: 30px; flex: none; }
.bw { fill: #cfe0fa; stroke: #1a73e8; stroke-width: 2; }
.gb { fill: #a8acb4; }
.wc { fill: #fff; stroke: #777; stroke-width: 1.500; }
.bfr { fill: #1a73e8; }
.dkf { fill: #4f5566; }
.pic { width: 26px; height: 26px; margin-left: 33px; flex: none; }
.dk2 { fill: none; stroke: #333; stroke-width: 2; }
.prompt { margin-left: 10px; padding-top: 3px; }
.chk { display: flex; align-items: center; gap: 13px; flex: none; margin-left: 26px; }
.chk span { padding-top: 3px; }
.chk.warn { margin-left: auto; }
.chk:last-child { padding-right: 21px; }
.cic { width: 24px; height: 24px; flex: none; }
.oc { fill: #f7932c; } .gc { fill: #6fbe0a; }
.wl3 { fill: none; stroke: #fff; stroke-width: 2.500; }
.foot { flex: 1; background: linear-gradient(#e8e8e8 0 2px, #cfcfcf 2px 4px, #f0f0f0 4px); }
```
